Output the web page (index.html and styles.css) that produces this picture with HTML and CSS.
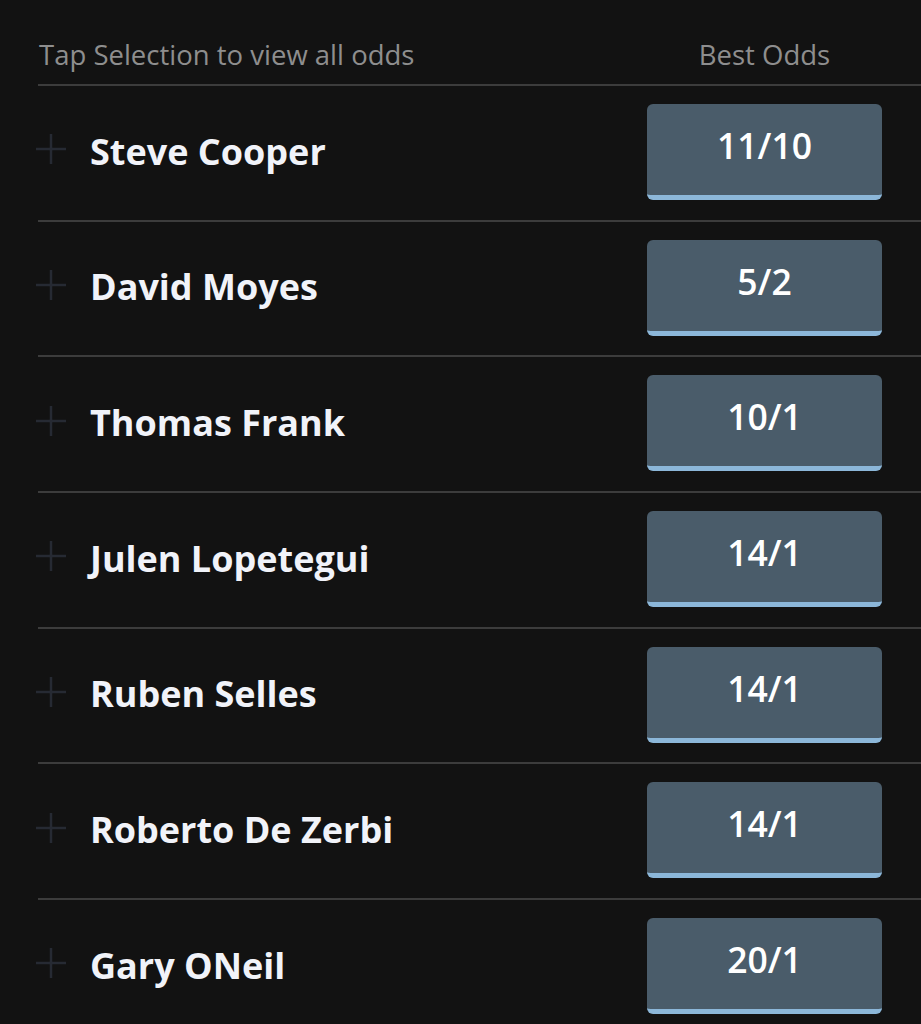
FILE: index.html
```html
<!DOCTYPE html>
<html>
<head>
<meta charset="utf-8">
<link rel="stylesheet" href="styles.css">
</head>
<body>
<div class="market">
  <div class="head">
    <span class="hint">Tap Selection to view all odds</span>
    <span class="best">Best Odds</span>
  </div>
  <div class="row">
    <div class="sel"><svg class="plus" viewBox="0 0 30 30"><path d="M15 0V30M0 15H30"/></svg><span class="name">Steve Cooper</span></div>
    <div class="odds">11/10</div>
  </div>
  <div class="row">
    <div class="sel"><svg class="plus" viewBox="0 0 30 30"><path d="M15 0V30M0 15H30"/></svg><span class="name">David Moyes</span></div>
    <div class="odds">5/2</div>
  </div>
  <div class="row">
    <div class="sel"><svg class="plus" viewBox="0 0 30 30"><path d="M15 0V30M0 15H30"/></svg><span class="name">Thomas Frank</span></div>
    <div class="odds">10/1</div>
  </div>
  <div class="row">
    <div class="sel"><svg class="plus" viewBox="0 0 30 30"><path d="M15 0V30M0 15H30"/></svg><span class="name">Julen Lopetegui</span></div>
    <div class="odds">14/1</div>
  </div>
  <div class="row">
    <div class="sel"><svg class="plus" viewBox="0 0 30 30"><path d="M15 0V30M0 15H30"/></svg><span class="name">Ruben Selles</span></div>
    <div class="odds">14/1</div>
  </div>
  <div class="row">
    <div class="sel"><svg class="plus" viewBox="0 0 30 30"><path d="M15 0V30M0 15H30"/></svg><span class="name">Roberto De Zerbi</span></div>
    <div class="odds">14/1</div>
  </div>
  <div class="row last">
    <div class="sel"><svg class="plus" viewBox="0 0 30 30"><path d="M15 0V30M0 15H30"/></svg><span class="name">Gary ONeil</span></div>
    <div class="odds">20/1</div>
  </div>
</div>
</body>
</html>
```
FILE: styles.css
```css
html, body {
  margin: 0;
  padding: 0;
  background: #121212;
}
body {
  font-family: "Open Sans", "Lato", sans-serif;
  overflow: hidden;
  height: 1024px;
}
.market {
  padding-left: 38px;
}
.head {
  display: flex;
  justify-content: space-between;
  align-items: flex-end;
  height: 86px;
  border-bottom: 2px solid #3c3c3c;
  box-sizing: border-box;
  padding-bottom: 11px;
}
.hint {
  color: #8e8e8e;
  font-size: 27.5px;
  margin-left: 1px;
}
.best {
  color: #8e8e8e;
  font-size: 27.5px;
  width: 235px;
  text-align: center;
  margin-right: 39px;
}
.row {
  display: flex;
  justify-content: space-between;
  height: 135.67px;
  border-bottom: 2px solid #3c3c3c;
  box-sizing: border-box;
}
.sel {
  display: flex;
  align-items: center;
  margin-left: -2px;
  padding-bottom: 3px;
}
.plus {
  width: 30px;
  height: 30px;
  stroke: #262a33;
  stroke-width: 2.5;
  fill: none;
  margin-bottom: 4px;
}
.name {
  margin-left: 24px;
  color: #f1f3f9;
  font-size: 36px;
  font-weight: 700;
}
.odds {
  align-self: flex-start;
  margin-top: 18px;
  margin-right: 39px;
  width: 235px;
  height: 96px;
  box-sizing: border-box;
  background: #4a5c6a;
  border-bottom: 5px solid #8cb7d9;
  border-radius: 6px;
  color: #ffffff;
  font-size: 35.5px;
  font-weight: 600;
  display: flex;
  justify-content: center;
  align-items: center;
  padding-bottom: 9px;
}
```
